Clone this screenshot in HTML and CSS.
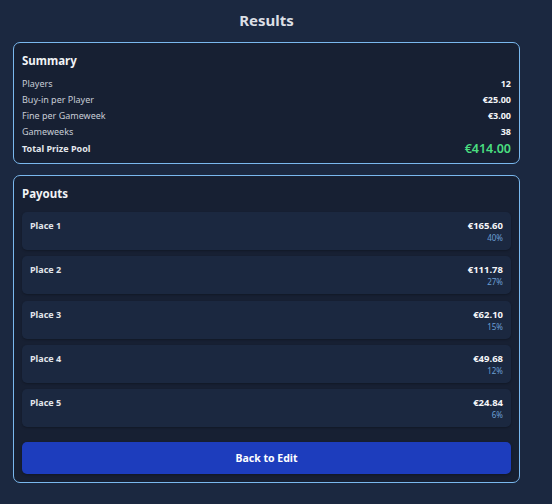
FILE: index.html
```html
<!DOCTYPE html>
<html>
<head>
<meta charset="utf-8">
<link rel="stylesheet" href="styles.css">
</head>
<body>
<div class="page">
  <h1 class="title">Results</h1>
  <section class="card summary">
    <h2 class="card-title">Summary</h2>
    <div class="row"><span class="label">Players</span><span class="val">12</span></div>
    <div class="row"><span class="label">Buy-in per Player</span><span class="val">€25.00</span></div>
    <div class="row"><span class="label">Fine per Gameweek</span><span class="val">€3.00</span></div>
    <div class="row"><span class="label">Gameweeks</span><span class="val">38</span></div>
    <div class="row total"><span class="label">Total Prize Pool</span><span class="val">€414.00</span></div>
  </section>
  <section class="card payouts">
    <h2 class="card-title">Payouts</h2>
    <div class="list">
      <div class="item"><span class="place">Place 1</span><div class="amt"><div class="money">€165.60</div><div class="pct">40%</div></div></div>
      <div class="item"><span class="place">Place 2</span><div class="amt"><div class="money">€111.78</div><div class="pct">27%</div></div></div>
      <div class="item"><span class="place">Place 3</span><div class="amt"><div class="money">€62.10</div><div class="pct">15%</div></div></div>
      <div class="item"><span class="place">Place 4</span><div class="amt"><div class="money">€49.68</div><div class="pct">12%</div></div></div>
      <div class="item"><span class="place">Place 5</span><div class="amt"><div class="money">€24.84</div><div class="pct">6%</div></div></div>
    </div>
    <button class="btn">Back to Edit</button>
  </section>
</div>
</body>
</html>
```
FILE: styles.css
```css
html, body {
  margin: 0;
  padding: 0;
  background: #1b2840;
  font-family: "Noto Sans", "Open Sans", sans-serif;
  color: #e2e8f0;
}
.page {
  width: 507px;
  margin-left: 13px;
  padding-top: 9px;
}
.title {
  margin: 0 0 11px;
  text-align: center;
  font-size: 15px;
  line-height: 22px;
  font-weight: 700;
  color: #dcdfe5;
}
.card {
  background: #172033;
  border: 1px solid #7ab8ee;
  border-radius: 7px;
  padding: 9px 8px 6px;
  margin-bottom: 11px;
}
.summary { padding-top: 9px; padding-bottom: 5px; }
.card-title {
  margin: 0 0 6px;
  font-size: 11.5px;
  line-height: 18px;
  font-weight: 700;
  color: #f1f3f6;
}
.row {
  display: flex;
  justify-content: space-between;
  align-items: center;
  font-size: 9px;
  line-height: 16px;
}
.row .label { color: #c7ccd6; }
.row .val { font-weight: 700; color: #f3f5f8; }
.row.total .label { font-weight: 700; color: #e4e7ec; }
.row.total { line-height: 18px; align-items: flex-start; }
.row.total .val { color: #4ade80; font-size: 12.5px; font-weight: 600; }
.payouts { padding-bottom: 8px; }
.payouts .card-title { margin-bottom: 9px; }
.list {
  display: flex;
  flex-direction: column;
  gap: 6.25px;
}
.item {
  display: flex;
  justify-content: space-between;
  align-items: flex-start;
  background: #1b2840;
  border-radius: 5px;
  padding: 8px 8px 6px;
  box-shadow: 0 1px 2px rgba(0,0,0,0.25);
  height: 24px;
}
.place {
  font-size: 9px;
  line-height: 12px;
  font-weight: 700;
  color: #e2e5ea;
}
.amt { text-align: right; }
.money {
  font-size: 9.5px;
  line-height: 12px;
  font-weight: 700;
  color: #f5f6f8;
}
.pct {
  font-size: 8px;
  line-height: 12px;
  color: #6b9fd4;
}
.btn {
  display: block;
  width: 100%;
  height: 32px;
  margin-top: 15px;
  border: none;
  border-radius: 5px;
  background: #1d3dbd;
  color: #fff;
  font-family: inherit;
  font-size: 10.5px;
  font-weight: 700;
  box-shadow: 0 1px 3px rgba(0,0,0,0.3);
}
```
